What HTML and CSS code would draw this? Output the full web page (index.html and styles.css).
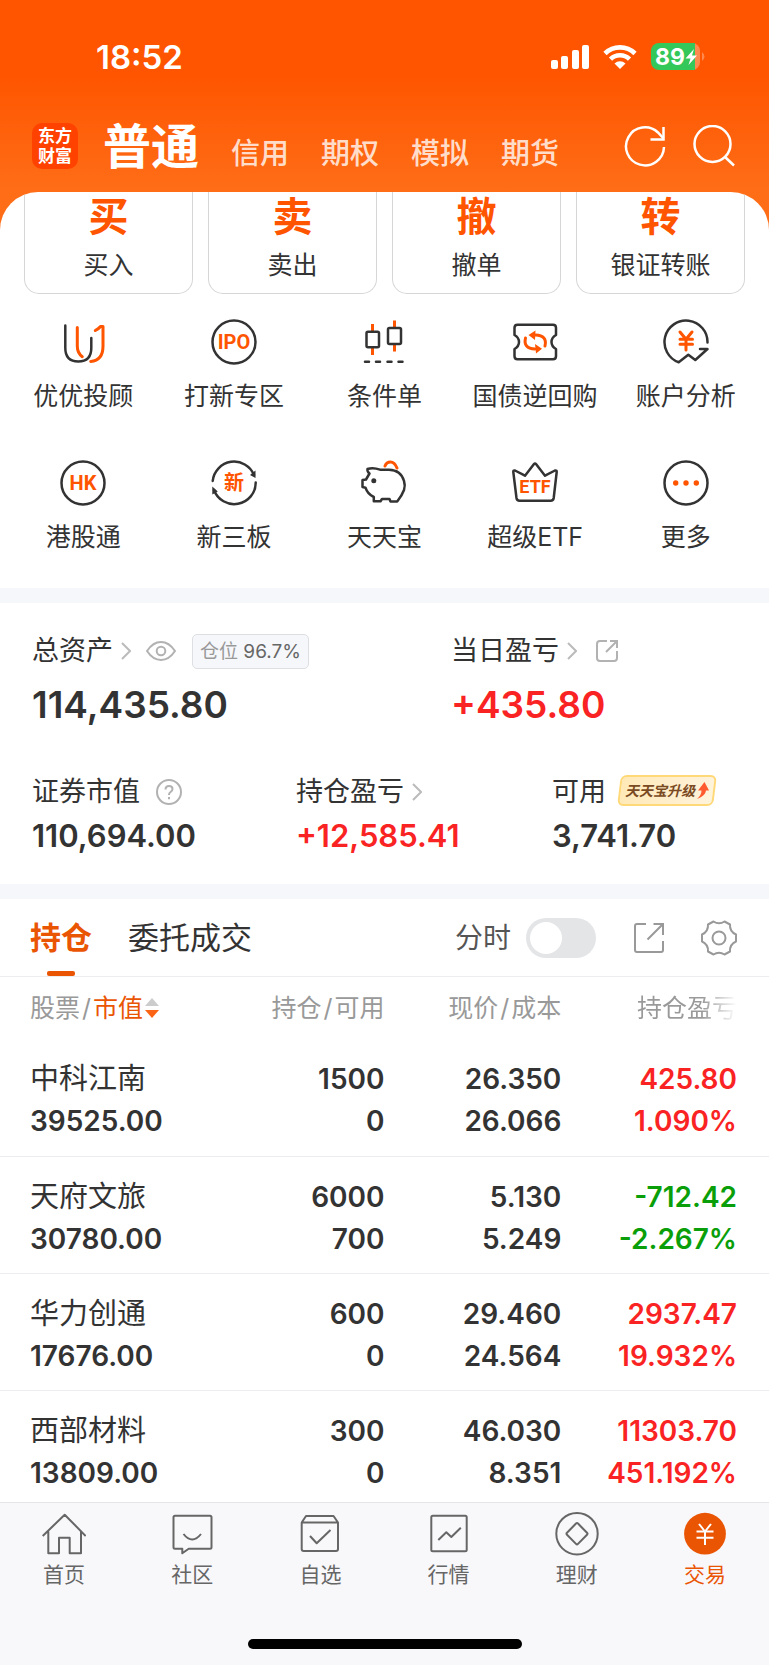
FILE: index.html
```html
<!DOCTYPE html>
<html lang="zh-CN">
<head>
    <meta charset="UTF-8">
    <meta name="viewport" content="width=device-width, initial-scale=1.0">
    <title>东方财富 - 交易</title>
    <link rel="stylesheet" href="styles.css">
</head>
<body>
    <!-- 顶部 -->
    <header class="header">
        <div class="status-bar">
            <span class="time">18:52</span>
            <div class="status-icons">
                <svg width="38" height="24" viewBox="0 0 38 24" fill="#fff">
                    <rect x="0" y="15" width="7" height="9" rx="2"/>
                    <rect x="10" y="11" width="7" height="13" rx="2"/>
                    <rect x="21" y="5" width="7" height="19" rx="2"/>
                    <rect x="31" y="0" width="7" height="24" rx="2"/>
                </svg>
                <svg class="wifi" width="34" height="24" viewBox="0 0 34 24">
                    <path d="M2 8.500a21.500 21.500 0 0 1 30 0M7.500 14.200a13.500 13.500 0 0 1 19 0" fill="none" stroke="#fff" stroke-width="4.600"/>
                    <path d="M17 24l-5.500-5.600a8 8 0 0 1 11 0z" fill="#fff"/>
                </svg>
                <svg width="54" height="28" viewBox="0 0 54 28">
                    <rect x="20" y="0" width="29" height="27" rx="8" fill="#ff8a50"/>
                    <path d="M8 0h36v27H8a8 8 0 0 1-8-8V8a8 8 0 0 1 8-8z" fill="#34c759"/>
                    <path d="M51 9q5 4.500 0 9z" fill="#ff8a50"/>
                    <text class="battery-text" x="4" y="22">89</text>
                    <path d="M43 6l-8.500 9.500h5L37.500 22l8.500-9.500h-5z" fill="#fff"/>
                </svg>
            </div>
        </div>
        <div class="title-bar">
            <div class="logo"><span>东方</span><span>财富</span></div>
            <nav class="account-tabs">
                <a class="current" href="#">普通</a>
                <a href="#">信用</a>
                <a href="#">期权</a>
                <a href="#">模拟</a>
                <a href="#">期货</a>
            </nav>
            <div class="title-actions">
                <button class="icon-btn" aria-label="刷新">
                    <svg width="42" height="42" viewBox="0 0 42 42" fill="none" stroke="#fff" stroke-width="2.500">
                        <path d="M40 22A19 19 0 1 1 34 7.500L39.500 13.500"/>
                        <path d="M39.500 2v12.500H26.500"/>
                    </svg>
                </button>
                <button class="icon-btn" aria-label="搜索">
                    <svg width="42" height="42" viewBox="0 0 42 42" fill="none" stroke="#fff" stroke-width="2.500">
                        <circle cx="19.500" cy="19" r="18"/>
                        <path d="M31.500 31.500L41 40.500"/>
                    </svg>
                </button>
            </div>
        </div>
    </header>

    <main class="sheet">
        <!-- 买卖入口 -->
        <div class="trade-cards">
            <button class="trade-card"><strong>买</strong><span>买入</span></button>
            <button class="trade-card"><strong>卖</strong><span>卖出</span></button>
            <button class="trade-card"><strong>撤</strong><span>撤单</span></button>
            <button class="trade-card"><strong>转</strong><span>银证转账</span></button>
        </div>

        <!-- 功能宫格 -->
        <div class="menu-grid">
            <a class="menu-item" href="#">
                <svg class="menu-icon" viewBox="0 0 48 48">
                    <path class="dark" d="M6.300 7.500V30q0 13.500 13 13.500T32.300 30V20"/>
                    <path class="orange" d="M18.300 9.500V28q0 7 5 10.700M36.300 12.500Q40 10.500 41.500 8.500H44V28q0 14.500-12.300 15.500"/>
                </svg>
                <span>优优投顾</span>
            </a>
            <a class="menu-item" href="#">
                <svg class="menu-icon" viewBox="0 0 48 48">
                    <circle class="dark" cx="24" cy="24" r="21.500"/>
                    <text class="icon-text" x="24" y="31">IPO</text>
                </svg>
                <span>打新专区</span>
            </a>
            <a class="menu-item" href="#">
                <svg class="menu-icon" viewBox="0 0 48 48">
                    <path class="orange butt" d="M12.500 6v7M12.500 30v7M34.500 2.500v7M34.500 26.500v7"/>
                    <rect class="dark" x="6.500" y="13.700" width="12.500" height="15.600" rx="1.500"/>
                    <rect class="dark" x="28" y="10" width="13" height="16" rx="1.500"/>
                    <path class="dark" d="M5 43.700h4M16 43.700h4M27.500 43.700h4M38.500 43.700h4"/>
                </svg>
                <span>条件单</span>
            </a>
            <a class="menu-item" href="#">
                <svg class="menu-icon" viewBox="0 0 48 48">
                    <path class="dark" d="M6.500 6.700h35.500q3 0 3 3V17q-4.500 2.500-4.500 7t4.500 7v7.300q0 3-3 3H6.500q-3 0-3-3V31q4.500-2.500 4.500-7t-4.500-7V9.700q0-3 3-3z"/>
                    <path class="orange" d="M14.500 20Q12 30.500 24 31M34 28Q36.500 17.500 24.500 17"/>
                    <path class="orange-fill" d="M24 26l7 4.700-6 4.800zM24.500 12.500l-7 4.500 6.500 5z"/>
                </svg>
                <span>国债逆回购</span>
            </a>
            <a class="menu-item" href="#">
                <svg class="menu-icon" viewBox="0 0 48 48">
                    <path class="dark" d="M45.500 24.500A21.500 21.500 0 1 0 16.700 44.300l9.600-7.600 7 5.300 12.200-11H38"/>
                    <path class="orange" d="M18 14l6 7.300 6-7.300M24 21.300V32M18 21.300h12.500M18 26.200h12.500"/>
                </svg>
                <span>账户分析</span>
            </a>
            <a class="menu-item" href="#">
                <svg class="menu-icon" viewBox="0 0 48 48">
                    <circle class="dark" cx="24" cy="24" r="21.500"/>
                    <text class="icon-text" x="24" y="31">HK</text>
                </svg>
                <span>港股通</span>
            </a>
            <a class="menu-item" href="#">
                <svg class="menu-icon" viewBox="0 0 48 48">
                    <path class="dark" d="M2.700 22A21.500 21.500 0 0 1 44 16M45.700 23.500A21.500 21.500 0 0 1 4 31"/>
                    <path class="dark-fill" d="M45.500 11.500v7.500l-5.500-3zM2.300 35.500V27.500l5.500 5z"/>
                    <text class="icon-text" x="24" y="31">新</text>
                </svg>
                <span>新三板</span>
            </a>
            <a class="menu-item" href="#">
                <svg class="menu-icon" viewBox="0 0 48 48">
                    <path class="orange" d="M25 7q1.500-4 5.500-4t6.500 6"/>
                    <path class="dark" d="M2.500 21v7l3 .700q2 6.500 8.300 9.300v4.300h6.700l1.500-2.300h7.500l1 2.500h6.700Q42 36.500 44 31q1.500-4.500 0-9-3-11-15-11.300H20Q13 8 7.500 10q-.500 2.500 2 4.500L6 20.500z"/>
                    <circle class="dark-fill" cx="13.800" cy="21.700" r="2.500"/>
                </svg>
                <span>天天宝</span>
            </a>
            <a class="menu-item" href="#">
                <svg class="menu-icon" viewBox="0 0 48 48">
                    <path class="dark" d="M4 11.500l10 5.200 9-11.700q1-1.200 2 0l9 11.700 10-5.200q2-.500 1.700 1.500l-3 26q-.400 2.700-3 2.700H8.500q-2.600 0-3-2.700L2.300 13q-.300-2 1.700-1.500z"/>
                    <text class="icon-text etf" x="24" y="34">ETF</text>
                </svg>
                <span>超级ETF</span>
            </a>
            <a class="menu-item" href="#">
                <svg class="menu-icon" viewBox="0 0 48 48">
                    <circle class="dark" cx="24" cy="24" r="21.500"/>
                    <g class="orange-fill"><circle cx="13.700" cy="24" r="2.700"/><circle cx="24" cy="24" r="2.700"/><circle cx="34.300" cy="24" r="2.700"/></g>
                </svg>
                <span>更多</span>
            </a>
        </div>

        <!-- 资产 -->
        <section class="assets">
            <div class="assets-main">
                <div>
                    <div class="asset-label">
                        总资产
                        <svg class="chevron" viewBox="0 0 10 18"><path d="M1 1l8 8-8 8"/></svg>
                        <button class="icon-btn eye" aria-label="隐藏金额">
                            <svg width="30" height="20" viewBox="0 0 30 20" fill="none" stroke="#b2b2b2" stroke-width="2">
                                <path d="M1 10Q7 1 15 1t14 9q-6 9-14 9T1 10z"/>
                                <circle cx="15" cy="10" r="4.300"/>
                            </svg>
                        </button>
                        <span class="position-tag">仓位 <b>96.7%</b></span>
                    </div>
                    <div class="asset-total">114,435.80</div>
                </div>
                <div>
                    <div class="asset-label">
                        当日盈亏
                        <svg class="chevron" viewBox="0 0 10 18"><path d="M1 1l8 8-8 8"/></svg>
                        <button class="icon-btn share" aria-label="分享">
                            <svg width="24" height="24" viewBox="0 0 24 24" fill="none" stroke="#b2b2b2" stroke-width="2">
                                <path d="M12 2H5Q2 2 2 5v14q0 3 3 3h14q3 0 3-3v-7M11 13L22 2M15 2h7v7"/>
                            </svg>
                        </button>
                    </div>
                    <div class="asset-total up">+435.80</div>
                </div>
            </div>
            <div class="assets-sub">
                <div>
                    <div class="asset-label">
                        证券市值
                        <button class="icon-btn help" aria-label="说明">
                            <svg width="26" height="26" viewBox="0 0 26 26" fill="none" stroke="#b2b2b2" stroke-width="2">
                                <circle cx="13" cy="13" r="12"/>
                                <path d="M9.500 10.500q0-3.500 3.500-3.500t3.500 3q0 1.500-1.700 2.700T13 15.500v.500M13 18v2.200"/>
                            </svg>
                        </button>
                    </div>
                    <div class="asset-value">110,694.00</div>
                </div>
                <div>
                    <div class="asset-label">
                        持仓盈亏
                        <svg class="chevron" viewBox="0 0 10 18"><path d="M1 1l8 8-8 8"/></svg>
                    </div>
                    <div class="asset-value up">+12,585.41</div>
                </div>
                <div>
                    <div class="asset-label">
                        可用
                        <a class="upgrade" href="#">
                            天天宝升级
                            <svg width="12" height="17" viewBox="0 0 12 17"><path d="M7.500 0L12 8.500H9Q8.500 14 0 17q4.500-4 4.500-8.500H1z" fill="#ff5a30"/></svg>
                        </a>
                    </div>
                    <div class="asset-value">3,741.70</div>
                </div>
            </div>
        </section>

        <!-- 持仓列表 -->
        <section class="holdings">
            <div class="holdings-bar">
                <button class="holdings-tab active">持仓</button>
                <button class="holdings-tab">委托成交</button>
                <div class="holdings-tools">
                    <label for="minute-switch">分时</label>
                    <input type="checkbox" id="minute-switch" class="switch">
                    <button class="icon-btn open" aria-label="打开">
                        <svg width="32" height="32" viewBox="0 0 32 32" fill="none" stroke="#999" stroke-width="2">
                            <path d="M13 2H4Q2 2 2 4v24q0 2 2 2h24q2 0 2-2V19M14.500 17.500L30 2M20.500 2H30v11"/>
                        </svg>
                    </button>
                    <button class="icon-btn gear" aria-label="设置">
                        <svg width="36" height="36" viewBox="0 0 36 36" fill="none" stroke="#999" stroke-width="2" stroke-linejoin="round">
                            <path d="M12.500 1.500Q18 5 23.500 1.500L29 4.500Q28.500 11.500 35 14.500V21.500Q28.500 24.500 29 31.500L23.500 34.500Q18 31 12.500 34.500L7 31.500Q7.500 24.500 1 21.500V14.500Q7.500 11.500 7 4.500Z"/>
                            <circle cx="18" cy="18" r="6.500"/>
                        </svg>
                    </button>
                </div>
            </div>
            <table class="stock-table">
                <thead>
                    <tr>
                        <th>股票<i>/</i><span class="sorted">市值</span><svg class="sort" viewBox="0 0 16 20"><path d="M8 0l7 8H1z" fill="#ccc"/><path d="M8 20l7-8H1z" fill="#fa6414"/></svg></th>
                        <th>持仓<i>/</i>可用</th>
                        <th>现价<i>/</i>成本</th>
                        <th><span class="fade">持仓盈亏</span></th>
                    </tr>
                </thead>
                <tbody>
                    <tr>
                        <td><span class="name">中科江南</span><span>39525.00</span></td>
                        <td><span>1500</span><span>0</span></td>
                        <td><span>26.350</span><span>26.066</span></td>
                        <td class="up"><span>425.80</span><span>1.090%</span></td>
                    </tr>
                    <tr>
                        <td><span class="name">天府文旅</span><span>30780.00</span></td>
                        <td><span>6000</span><span>700</span></td>
                        <td><span>5.130</span><span>5.249</span></td>
                        <td class="down"><span>-712.42</span><span>-2.267%</span></td>
                    </tr>
                    <tr>
                        <td><span class="name">华力创通</span><span>17676.00</span></td>
                        <td><span>600</span><span>0</span></td>
                        <td><span>29.460</span><span>24.564</span></td>
                        <td class="up"><span>2937.47</span><span>19.932%</span></td>
                    </tr>
                    <tr>
                        <td><span class="name">西部材料</span><span>13809.00</span></td>
                        <td><span>300</span><span>0</span></td>
                        <td><span>46.030</span><span>8.351</span></td>
                        <td class="up"><span>11303.70</span><span>451.192%</span></td>
                    </tr>
                </tbody>
            </table>
        </section>
    </main>

    <!-- 底部导航 -->
    <footer class="tab-bar">
        <nav>
            <a href="#">
                <svg viewBox="0 0 44 44"><path d="M.700 24l22-21.300 21 21.300M6.300 19.500v21.800H17V25.700h10.700v15.600H39V19.500"/></svg>
                首页
            </a>
            <a href="#">
                <svg viewBox="0 0 44 44"><path d="M5 3.700h35q1.500 0 1.500 1.500v30q0 1.500-1.500 1.500H18.700l-6.400 4.600v-4.600H5q-1.500 0-1.500-1.500v-30q0-1.500 1.500-1.500zM13.500 22q8.700 11 17.500 0"/></svg>
                社区
            </a>
            <a href="#">
                <svg viewBox="0 0 44 44"><path d="M3.700 10.500H40V37q0 2-2 2H5.700q-2 0-2-2zL8 4h27.500l4.500 6.500M12 24l6.700 7.300L32.500 18"/></svg>
                自选
            </a>
            <a href="#">
                <svg viewBox="0 0 44 44"><rect x="4.300" y="3.700" width="35.400" height="35.600" rx="1.500"/><path d="M11.300 28l8-7.700 5 4.700 9.500-9.300"/></svg>
                行情
            </a>
            <a href="#">
                <svg viewBox="0 0 44 44"><circle cx="22" cy="21.700" r="20.700"/><path d="M21 11.500q1-1 2 0l9 9.200q1 1 0 2l-9 9.200q-1 1-2 0l-9-9.200q-1-1 0-2z"/></svg>
                理财
            </a>
            <a class="active" href="#">
                <svg viewBox="0 0 44 44"><circle cx="22" cy="21.700" r="20.900" fill="#ea5504" stroke="none"/><path d="M16 12l6 7.500 6-7.500M22 19.500V33M13.500 19.500h17M13.500 25.700h17" stroke="#fff"/></svg>
                交易
            </a>
        </nav>
        <div class="home-indicator"></div>
    </footer>
</body>
</html>
```
FILE: styles.css
```css
/* 全局 */
* { box-sizing: border-box; }
body {
    margin: 0;
    height: 100vh;
    display: flex;
    flex-direction: column;
    font-family: "Inter", "Noto Sans CJK SC", sans-serif;
    color: #333;
    background: linear-gradient(#ff5500 75px, #ff6d17 190px);
}
a { color: inherit; text-decoration: none; }
button { font: inherit; color: inherit; background: none; border: none; padding: 0; cursor: pointer; }
svg { display: block; flex: none; }
.icon-btn { display: block; flex: none; }
.up { color: #fa2323; }
.down { color: #0a9f0a; }

/* 顶部 */
.header { flex: none; color: #fff; }
.status-bar { display: flex; align-items: center; justify-content: space-between; height: 114px; padding: 0 64px 0 96px; }
.time { font-size: 33px; font-weight: 600; }
.status-icons { display: flex; align-items: center; gap: 14px; }
.battery-text { font-size: 23px; font-weight: 700; fill: #fff; }
.title-bar { display: flex; align-items: center; height: 64px; margin-bottom: 14px; padding: 0 34px 0 32px; }
.logo {
    display: flex;
    flex-direction: column;
    align-items: center;
    justify-content: center;
    width: 46px;
    height: 46px;
    border-radius: 10px;
    background-color: #ff4200;
    font-size: 17px;
    line-height: 20px;
    font-weight: 700;
}
.account-tabs { display: flex; align-items: baseline; gap: 32px; margin-left: 25px; padding-top: 8px; font-size: 29px; line-height: 64px; white-space: nowrap; }
.account-tabs a { color: rgba(255, 255, 255, 0.8); font-weight: 500; }
.account-tabs .current { color: #fff; font-size: 48px; font-weight: 700; }
.title-actions { display: flex; gap: 27px; margin-left: auto; }

/* 白色面板 */
.sheet { flex: 1; min-height: 0; overflow: hidden; background-color: #fff; border-radius: 38px 38px 0 0; }

/* 买卖入口 */
.trade-cards { display: grid; grid-template-columns: repeat(4, 1fr); gap: 15px; padding: 0 24px; }
.trade-card {
    display: flex;
    flex-direction: column;
    align-items: center;
    gap: 8px;
    padding: 3px 0 10px;
    border: 1px solid #d6d6d6;
    border-top: none;
    border-radius: 0 0 15px 15px;
}
.trade-card strong { color: #ff5500; font-size: 40px; line-height: 44px; font-weight: 700; }
.trade-card span { font-size: 25px; line-height: 36px; }

/* 功能宫格 */
.menu-grid { display: grid; grid-template-columns: repeat(5, 1fr); row-gap: 45px; padding: 24px 8px 33px; }
.menu-item { display: flex; flex-direction: column; align-items: center; gap: 12px; font-size: 25px; line-height: 36px; white-space: nowrap; }
.menu-icon { width: 48px; height: 48px; }
.menu-icon .dark { fill: none; stroke: #333; stroke-width: 2.5; stroke-linecap: round; stroke-linejoin: round; }
.menu-icon .orange { fill: none; stroke: #ff5500; stroke-width: 3; stroke-linecap: round; stroke-linejoin: round; }
.menu-icon .butt { stroke-linecap: butt; }
.menu-icon .dark-fill { fill: #333; }
.menu-icon .orange-fill { fill: #ff5500; }
.icon-text { font-family: "Roboto", "Noto Sans CJK SC", sans-serif; font-size: 20px; font-weight: 700; fill: #ff5500; text-anchor: middle; }
.etf { font-size: 18px; }

/* 资产 */
.assets { padding: 30px 32px; border-top: 15px solid #f6f7fa; border-bottom: 15px solid #f6f7fa; }
.assets-main { display: grid; grid-template-columns: 419fr 286fr; margin-bottom: 46px; }
.assets-sub { display: grid; grid-template-columns: 264fr 256fr 185fr; }
.asset-label { display: flex; align-items: center; height: 36px; font-size: 27px; line-height: 36px; white-space: nowrap; }
.chevron { width: 10px; height: 18px; margin-left: 8px; fill: none; stroke: #bbb; stroke-width: 2; }
.eye { margin-left: 15px; }
.share { margin-left: 18px; }
.help { margin-left: 16px; }
.position-tag { margin-left: 16px; padding: 0 7px; border: 1px solid #dedfe2; border-radius: 5px; background-color: #f6f7fa; color: #999; font-size: 19px; line-height: 33px; }
.position-tag b { color: #666; font-weight: 400; }
.asset-total { margin-top: 13px; font-size: 37px; line-height: 46px; font-weight: 600; }
.asset-value { margin-top: 8px; font-size: 31px; line-height: 36px; font-weight: 600; }
.upgrade {
    position: relative;
    z-index: 0;
    display: flex;
    align-items: center;
    gap: 2px;
    height: 31px;
    margin: 0 0 3px 13px;
    padding: 0 6px;
    color: #7a4a22;
    font-size: 14px;
    font-style: italic;
    font-weight: 700;
}
.upgrade::before {
    content: "";
    position: absolute;
    inset: 0;
    z-index: -1;
    border: 2px solid #ffd878;
    border-radius: 6px;
    background: linear-gradient(90deg, #ffe9b8, #fff3dc);
    transform: skewX(-7deg);
}

/* 持仓列表 */
.holdings-bar { display: flex; align-items: center; height: 78px; padding: 0 32px 0 30px; border-bottom: 1px solid #ededf0; }
.holdings-tab { position: relative; height: 77px; margin-right: 36px; font-size: 31px; line-height: 36px; white-space: nowrap; }
.holdings-tab.active { color: #ea5504; font-weight: 700; }
.holdings-tab.active::after { content: ""; position: absolute; left: 17px; right: 17px; bottom: 0; height: 5px; border-radius: 2px; background-color: #ea5504; }
.holdings-tools { display: flex; align-items: center; margin-left: auto; color: #555; font-size: 28px; line-height: 36px; }
.switch { appearance: none; width: 70px; height: 40px; margin: 0 0 0 15px; padding: 4px; border-radius: 20px; background-color: #e4e5e7; }
.switch::before { content: ""; display: block; width: 32px; height: 32px; border-radius: 50%; background-color: #fff; }
.switch:checked { background-color: #ea5504; }
.switch:checked::before { margin-left: auto; }
.open { margin-left: 37px; }
.gear { margin-left: 36px; }
.stock-table { width: 100%; table-layout: fixed; border-collapse: collapse; }
.stock-table th { height: 62px; padding: 0; color: #999; font-size: 25px; line-height: 36px; font-weight: 400; text-align: right; white-space: nowrap; }
.stock-table th i { margin: 0 2px; font-style: normal; }
.stock-table td { height: 117px; padding: 6px 0 0; border-bottom: 1px solid #ededf0; font-size: 28px; line-height: 42px; font-weight: 600; text-align: right; }
.stock-table td span { display: block; }
.stock-table th:first-child, .stock-table td:first-child { width: 27%; padding-left: 30px; text-align: left; }
.stock-table th:nth-child(2), .stock-table th:nth-child(3) { width: 23%; }
.stock-table th:last-child, .stock-table td:last-child { padding-right: 32px; }
.stock-table .name { font-size: 29px; font-weight: 400; }
.sorted { color: #ea5504; }
.sort { display: inline-block; width: 16px; height: 20px; margin-left: 1px; vertical-align: -1px; }
.fade { color: transparent; background: linear-gradient(90deg, #999 65%, #fff); background-clip: text; }

/* 底部导航 */
.tab-bar { flex: none; padding: 9px 0 16px; border-top: 1px solid #e6e6e9; background-color: #f8f8fb; }
.tab-bar nav { display: grid; grid-template-columns: repeat(6, 1fr); color: #666; font-size: 21px; line-height: 30px; }
.tab-bar a { display: flex; flex-direction: column; align-items: center; gap: 4px; }
.tab-bar svg { width: 44px; height: 44px; fill: none; stroke: #666; stroke-width: 2; stroke-linejoin: round; }
.tab-bar .active { color: #ea5504; }
.home-indicator { width: 274px; height: 10px; margin: 49px auto 0; border-radius: 5px; background-color: #000; }
```
